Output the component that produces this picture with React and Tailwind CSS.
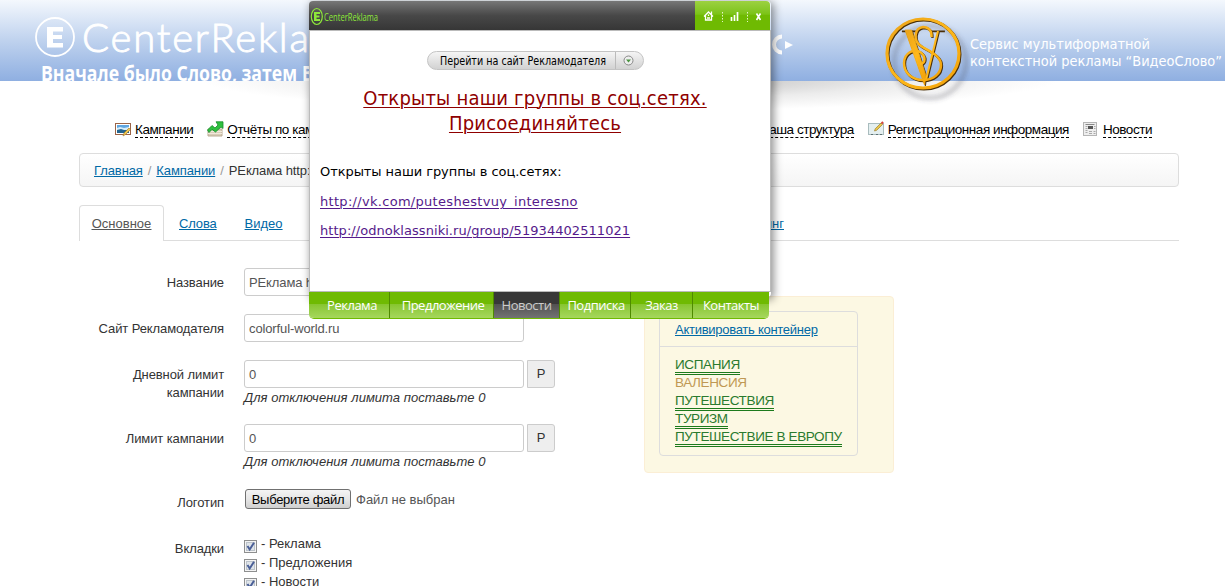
import React from "react";

const PictureIcon = () => (
  <svg width="16" height="16" viewBox="0 0 16 16">
    <rect x="0.5" y="2.5" width="15" height="11" fill="#fff" stroke="#9a6447" />
    <rect x="2" y="4" width="12" height="8" fill="#5fa6e0" />
    <path d="M2 7l3-1 4 1 5-1v3H2z" fill="#d7eefa" />
    <path d="M2 9l4-1 3 1h5v3H2z" fill="#25658f" />
    <path d="M8 15l1-3 5-5 1.500 1.500-5 5z" fill="#f0c850" stroke="#9c7426" strokeWidth=".6" />
  </svg>
);

const ReportIcon = () => (
  <svg width="17" height="16" viewBox="0 0 17 16">
    <path d="M1 8h14v7H1z" fill="#d9cdb8" stroke="#b9ab94" />
    <path d="M1 10.500h14M1 12.500h14" stroke="#efe8db" />
    <path d="M0.500 9L5 4.500l3 2.500 3-3L9 0.800h7V7.500l-2-1.500-5.500 5L5 8.400 2 11.500z" fill="#2fc03f" stroke="#178a2b" strokeWidth=".8" />
  </svg>
);

const FormIcon = () => (
  <svg width="17" height="16" viewBox="0 0 17 16">
    <rect x="0.500" y="2.500" width="15" height="11" fill="#e4eff0" stroke="#a9bcbe" />
    <path d="M3 13.500h2M8 13.500h2M12 13.500h2" stroke="#5d7072" />
    <path d="M6.500 10l.7-2.200L13 2l1.500 1.500L8.700 9.300z" fill="#e8c64c" stroke="#a07f2c" strokeWidth=".7" />
    <path d="M12.800 1.800L14.300.3l1.500 1.500-1.500 1.500z" fill="#d9463f" />
  </svg>
);

const NewsIcon = () => (
  <svg width="15" height="16" viewBox="0 0 15 16">
    <rect x="0.500" y="1.500" width="13" height="13" fill="#eee" stroke="#b5b5b5" />
    <path d="M2.500 3.500h9" stroke="#888" />
    <rect x="5" y="5" width="5" height="3" fill="#555" />
    <path d="M2.500 5.500h2M2.500 7.500h2M2.500 9.500h2M2.500 11.500h2M11 5.500h1.500M11 7.500h1.500M6 10.500h3M6 12.500h3M10.500 10.500h2M10.500 12.500h2" stroke="#aaa" />
  </svg>
);

function NavItem({ icon, children }) {
  return (
    <div className="flex h-[17px] shrink-0 items-start">
      <span className="flex w-5 shrink-0">{icon}</span>
      <span className="h-[17px] border-b border-dashed border-black text-[13.5px] leading-[18px] tracking-[-0.46px] whitespace-nowrap">{children}</span>
    </div>
  );
}

function SiteHeader() {
  return (
    <header className="relative h-[81px] bg-linear-to-b from-[#f4f8fd] via-[#bfd2ee] to-[#8fafe1]">
      <div className="absolute top-[81px] left-[200px] h-[30px] w-[860px] overflow-hidden">
        <div className="-mt-[34px] h-[64px] bg-[radial-gradient(closest-side,#b4b4b4,#cfcfcf_30%,#ececec_62%,#ffffff)]" />
      </div>
      <svg className="absolute top-0 left-0 overflow-hidden" width="800" height="81">
        <circle cx="55" cy="37" r="19" fill="none" stroke="#fff" strokeWidth="1.800" />
        <path d="M47 27h16v4.500h-10v3.500h9v4h-9v4h10v4.500H47z" fill="#fff" />
        <text x="82" y="52" fill="#fff" fontFamily="Lato" fontWeight="300" fontSize="40" stroke="#fff" strokeWidth=".9" textLength="282">CenterReklama</text>
        <text x="41" y="80.500" fill="#fff" fontFamily="Open Sans" fontWeight="700" fontSize="21.500" textLength="256" lengthAdjust="spacingAndGlyphs">Вначале было Слово, затем</text>
        <text x="302" y="80.500" fill="#fff" fontFamily="Open Sans" fontWeight="700" fontSize="21.500" textLength="55" lengthAdjust="spacingAndGlyphs">Видео</text>
        <path d="M782 36.500a8 8 0 1 0 0 16" fill="none" stroke="#fff" strokeWidth="4" />
        <path d="M785 41l8 4-8 4z" fill="#fff" />
      </svg>
      <svg className="absolute top-[10px] left-[880px]" width="90" height="95" viewBox="0 0 90 95">
        <defs>
          <filter id="soft" x="-20%" y="-20%" width="150%" height="150%"><feGaussianBlur stdDeviation="2" /></filter>
          <linearGradient id="gold" x1="0" y1="0" x2="1" y2="1">
            <stop offset="0" stopColor="#e9a21a" /><stop offset=".5" stopColor="#ffb81a" /><stop offset="1" stopColor="#f0a008" />
          </linearGradient>
        </defs>
        <circle cx="50" cy="52" r="36" fill="none" stroke="#445" strokeOpacity=".25" strokeWidth="5" filter="url(#soft)" />
        {[["#4a2f08", 0.9], ["url(#gold)", 0]].map(([color, shift]) => (
          <g key={color} transform={"translate(" + shift + " " + shift + ")"} fill="none" stroke={color}>
            <ellipse cx="43" cy="43.500" rx="36" ry="34.500" strokeWidth="3.200" />
            <path d="M21 20.500h14M49 20.500h15" strokeWidth="1.800" />
            <path d="M25 20h6.500L46 66l-1.500 9z" fill={color} strokeWidth=".8" />
            <path d="M58 21L46 70" strokeWidth="2" />
            <path d="M51.500 27C52 19 47 17 43 17c-9 1-10 14-2 19 7 5 20 9 20 19 0 9-8 15-18 15-12 0-19-8-19-17 0-10 10-15 16-11 6 4 6 11 0 12" strokeWidth="2.500" />
          </g>
        ))}
      </svg>
      <svg className="absolute top-[34px] left-[970px]" width="255" height="40">
        <text x="0" y="15" fill="#fff" fontFamily="DejaVu Sans" fontSize="14" textLength="180" lengthAdjust="spacingAndGlyphs">Сервис мультиформатной</text>
        <text x="0" y="32" fill="#fff" fontFamily="DejaVu Sans" fontSize="14" textLength="252" lengthAdjust="spacingAndGlyphs">контекстной рекламы “ВидеоСлово”</text>
      </svg>
    </header>
  );
}

function Field({ label, height, children }) {
  return (
    <div className={"flex gap-5 " + height}>
      <div className="w-[145px] shrink-0 pt-[6px] text-right leading-[18px] tracking-[-0.1px] text-[#333]">{label}</div>
      <div>{children}</div>
    </div>
  );
}

const inputBox = "flex h-7 w-[280px] items-center overflow-hidden rounded-[3px] border border-[#ccc] bg-white px-1 pt-px tracking-[-0.12px] text-[#555] whitespace-nowrap";

function LimitInput() {
  return (
    <>
      <div className="flex gap-[3px]">
        <div className={inputBox}>0</div>
        <div className="flex size-7 items-center justify-center rounded-r-[3px] border border-[#ccc] bg-[#eee] text-[13px] text-[#333]">Р</div>
      </div>
      <p className="leading-[19px] tracking-[0.04px] whitespace-nowrap italic">Для отключения лимита поставьте 0</p>
    </>
  );
}

function Check({ children }) {
  return (
    <div className="flex h-[19px] items-start gap-1 leading-[18px]">
      <svg className="mt-[6px] shrink-0" width="13" height="13">
        <rect x=".5" y=".5" width="12" height="12" fill="#f4f4f4" stroke="#8e8f8f" />
        <rect x="2.500" y="2.500" width="8" height="8" fill="#dfe4e9" stroke="#bcc3ca" />
        <path d="M3.500 6l2.200 3.500L10 2.800" fill="none" stroke="#4a5f97" strokeWidth="2" />
      </svg>
      <span className="mt-px">- {children}</span>
    </div>
  );
}

function Keywords() {
  const link = "border-b-3 border-double border-[#1c7a1c] text-[#2a7a2e]";
  return (
    <aside className="mt-[28px] ml-[89px] h-[177px] w-[250px] shrink-0 rounded-[4px] border border-[#fbeed5] bg-[#fcf8e3] p-[14px]">
      <div className="h-[145px] w-[199px] rounded-[4px] border border-[#ddd]">
        <div className="h-[35px] border-b border-[#ddd] pt-[8px] pl-[15px] leading-[20px] tracking-[-0.27px] text-[#0069a6] underline">Активировать контейнер</div>
        <ul className="pt-[9px] pl-[15px] text-[13.5px] leading-[18px] tracking-[-0.37px] whitespace-nowrap">
          {["ИСПАНИЯ", "ВАЛЕНСИЯ", "ПУТЕШЕСТВИЯ", "ТУРИЗМ", "ПУТЕШЕСТВИЕ В ЕВРОПУ"].map((w) => (
            <li key={w} className="h-[18px]">
              <span className={w === "ВАЛЕНСИЯ" ? "text-[#c09853]" : link}>{w}</span>
            </li>
          ))}
        </ul>
      </div>
    </aside>
  );
}

function Popup() {
  const tabs = [
    ["Реклама", "w-[81px] pl-[6px]"],
    ["Предложение", "w-[104px] pl-[3px]"],
    ["Новости", "w-[66px]"],
    ["Подписка", "w-[71px] pl-[2px]"],
    ["Заказ", "w-[62px]"],
    ["Контакты", "w-[76px]"],
  ];
  return (
    <section className="absolute top-px left-[309px] h-[318px] w-[462px] font-['DejaVu_Sans',sans-serif] text-black">
      <div className="absolute top-0 right-0 left-0 h-[296px] rounded-[4px] shadow-[2px_2px_8px_1px_rgba(0,0,0,0.42)]" />
      <div className="relative flex h-[318px] flex-col">
        <div className="flex h-[29px] w-[461px] overflow-hidden rounded-t-[4px]">
          <div className="flex flex-1 items-center bg-linear-to-b from-[#777] via-[#484848] via-50% to-[#363636]">
            <svg width="80" height="29">
              <ellipse cx="7.800" cy="15.500" rx="5.500" ry="8" fill="none" stroke="#8ee83a" strokeWidth="1.200" />
              <path d="M5 11h6v2H7.500v1.500h3v2h-3V18H11v2H5z" fill="#8ee83a" />
              <text x="15" y="20" fill="#8ee83a" fontFamily="Open Sans" fontSize="11.500" textLength="54" lengthAdjust="spacingAndGlyphs">CenterReklama</text>
            </svg>
          </div>
          <svg width="75" height="29" className="bg-linear-to-b from-[#9cd140] from-0% via-[#7cc316] via-45% to-[#6fba02] to-50%">
            <path d="M9 15.500l4.500-4.500 4.500 4.500M10.500 14.500v4.500h6v-4.500M16.500 10.500v3M12 17h3M13.500 13.500v1.500" fill="none" stroke="#fff" strokeWidth="1.300" />
            <path d="M27.500 11v10M52.500 11v10" stroke="#e5f5c8" strokeDasharray="1.500 1.500" />
            <path d="M36.500 16v4M39.500 14v6M42.500 11v9" stroke="#fff" strokeWidth="1.700" />
            <path d="M61.500 12.500l4 6.500M65.500 12.500l-4 6.500" stroke="#fff" strokeWidth="1.600" />
          </svg>
        </div>
        <div className="flex h-[262px] w-[462px] flex-col border border-[#bbb] bg-white px-[10px] pt-5">
          <div className="ml-[107px] flex h-[19px] w-[217px] items-stretch rounded-full border border-[#c4c4c4] bg-linear-to-b from-[#f5f5f5] to-[#d2d2d2]">
            <svg width="187" height="17">
              <text x="12" y="13" fontFamily="DejaVu Sans Condensed, DejaVu Sans" fontSize="11.500" fontStretch="condensed" textLength="166" lengthAdjust="spacingAndGlyphs">Перейти на сайт Рекламодателя</text>
            </svg>
            <svg width="28" height="17">
              <path d="M.5 0v17" stroke="#bbb" />
              <circle cx="13.500" cy="8.500" r="4.500" fill="#eee" stroke="#888" />
              <path d="M11 7.500h5l-2.500 3z" fill="#4a9440" />
            </svg>
          </div>
          <h1 className="mt-4 pr-[10px] text-center font-['DejaVu_Sans_Condensed','DejaVu_Sans',sans-serif] text-[20px] leading-[25px] tracking-[0.2px] text-[#8f0000] underline decoration-1 underline-offset-2 [font-stretch:condensed]">Открыты наши группы в соц.сетях.<br />Присоединяйтесь</h1>
          <p className="mt-[26px] text-[13px] leading-[20px] tracking-[-0.07px]">Открыты наши группы в соц.сетях:</p>
          <p className="mt-[10px] text-[13px] leading-[20px] tracking-[0.3px] text-[#551a8b] underline decoration-1 underline-offset-2">http://vk.com/puteshestvuy_interesno</p>
          <p className="mt-[9px] text-[13px] leading-[20px] tracking-[0.05px] text-[#551a8b] underline decoration-1 underline-offset-2">http://odnoklassniki.ru/group/51934402511021</p>
        </div>
        <div className="flex h-[27px] w-[460px] overflow-hidden rounded-b-[5px] border-b border-[#6fba02] font-['Open_Sans',sans-serif] text-[13px] tracking-[-0.5px]">
          {tabs.map(([name, size]) => (
            <div key={name} className={"flex shrink-0 items-center justify-center border-r border-[#4f8a00] pt-px whitespace-nowrap last:border-r-0 " + size + (name === "Новости" ? " bg-linear-to-b from-[#383838] from-45% via-[#505050] via-45% to-[#737373] text-[#ccc]" : " bg-linear-to-b from-[#6fba02] from-45% via-[#86c52c] via-45% to-[#a6d75c] text-white")}>{name}</div>
          ))}
        </div>
      </div>
    </section>
  );
}

export default function App() {
  return (
    <div className="relative h-[586px] w-[1225px] overflow-hidden bg-white font-['Liberation_Sans',Arial,sans-serif] text-[13px] text-[#333]">
      <SiteHeader />
      <nav className="relative flex justify-between pt-[40px] pl-[115px] text-black">
        <div className="flex gap-[14px]">
          <NavItem icon={<PictureIcon />}>Кампании</NavItem>
          <NavItem icon={<ReportIcon />}>Отчёты по кампаниям</NavItem>
        </div>
        <div className="flex gap-[14px] pr-[73px]">
          <NavItem icon={<NewsIcon />}>Наша структура</NavItem>
          <NavItem icon={<FormIcon />}>Регистрационная информация</NavItem>
          <NavItem icon={<NewsIcon />}>Новости</NavItem>
        </div>
      </nav>
      <main className="relative ml-[79px] w-[1100px]">
        <div className="mt-[15px] flex h-[34px] items-center gap-[5px] rounded-[4px] border border-[#ddd] bg-linear-to-b from-white to-[#f5f5f5] pt-px pl-[14px] tracking-[-0.1px]">
          <a className="text-[#0069a6] underline">Главная</a>
          <span className="text-[#999]">/</span>
          <a className="text-[#0069a6] underline">Кампании</a>
          <span className="text-[#999]">/</span>
          <span>РЕклама http://</span>
        </div>
        <div className="mt-[18px] flex h-[36px] border-b border-[#ddd] text-[#0069a6] underline">
          <div className="h-[36px] w-[85px] rounded-t-[4px] border border-b-0 border-[#ddd] bg-white pt-[9px] text-center leading-[18px] text-[#555] underline">Основное</div>
          <div className="ml-[15px] pt-[10px] leading-[18px] tracking-[-0.15px]">Слова</div>
          <div className="ml-[28px] pt-[10px] leading-[18px]">Видео</div>
          <div className="mr-[395px] ml-auto pt-[10px] leading-[18px]">Ретаргетинг</div>
        </div>
        <div className="flex">
          <form className="w-[476px] pt-[27px]">
            <Field label="Название" height="h-[46px]"><div className={inputBox}>РЕклама http://</div></Field>
            <Field label="Сайт Рекламодателя" height="h-[46px]"><div className={inputBox}>colorful-world.ru</div></Field>
            <Field label={<>Дневной лимит<br />кампании</>} height="h-[64px]"><LimitInput /></Field>
            <Field label="Лимит кампании" height="h-[64px]"><LimitInput /></Field>
            <Field label="Логотип" height="h-[46px]">
              <div className="flex items-center gap-[5px] pt-px pl-px">
                <span className="flex h-5 w-[106px] items-center justify-center rounded-[3px] border border-[#707070] bg-linear-to-b from-[#f4f4f4] via-[#e6e6e6] via-50% to-[#cfcfcf] pt-px tracking-[-0.3px] whitespace-nowrap text-black">Выберите файл</span>
                <span className="pt-px text-[#555]">Файл не выбран</span>
              </div>
            </Field>
            <Field label="Вкладки" height="h-[60px]">
              <Check>Реклама</Check>
              <Check>Предложения</Check>
              <Check>Новости</Check>
            </Field>
          </form>
          <div className="mt-[27px]"><Keywords /></div>
        </div>
      </main>
      <Popup />
    </div>
  );
}
